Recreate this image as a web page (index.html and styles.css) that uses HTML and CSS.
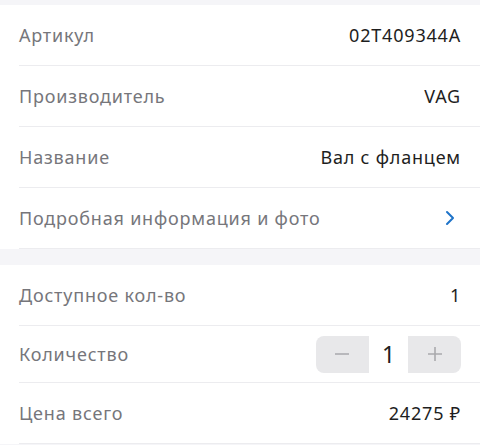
FILE: index.html
```html
<!DOCTYPE html>
<html lang="ru">
<head>
<meta charset="utf-8">
<link rel="stylesheet" href="styles.css">
</head>
<body>
<div class="page">
  <section class="group">
    <div class="row"><span class="label">Артикул</span><span class="value">02T409344A</span></div>
    <div class="row"><span class="label">Производитель</span><span class="value">VAG</span></div>
    <div class="row"><span class="label">Название</span><span class="value">Вал с фланцем</span></div>
    <div class="row"><span class="label">Подробная информация и фото</span>
      <svg class="chev" width="10" height="16" viewBox="0 0 10 16"><path d="M2 2 L8 8 L2 14" fill="none" stroke="#1f74c9" stroke-width="2" stroke-linecap="round" stroke-linejoin="round"/></svg>
    </div>
  </section>
  <section class="group second">
    <div class="row"><span class="label">Доступное кол-во</span><span class="value">1</span></div>
    <div class="row short"><span class="label">Количество</span>
      <div class="stepper">
        <span class="btn"><svg width="18" height="18" viewBox="0 0 18 18"><path d="M2 9 H16" stroke="#a9a9ad" stroke-width="1.6"/></svg></span>
        <span class="qty">1</span>
        <span class="btn"><svg width="18" height="18" viewBox="0 0 18 18"><path d="M2 9 H16 M9 2 V16" stroke="#a9a9ad" stroke-width="1.6"/></svg></span>
      </div>
    </div>
    <div class="row"><span class="label">Цена всего</span><span class="value">24275 ₽</span></div>
  </section>
</div>
</body>
</html>
```
FILE: styles.css
```css
html, body { margin: 0; padding: 0; }
body {
  background: #f5f5f8;
  font-family: "Noto Sans", "Open Sans", sans-serif;
  font-size: 18px;
  letter-spacing: 0.8px;
}
.page { padding-top: 5px; }
.group { background: #fff; padding-left: 19px; }
.second { margin-top: 16px; }
.row {
  height: 60px;
  display: flex;
  align-items: center;
  justify-content: space-between;
  padding-right: 19px;
  border-bottom: 1px solid #ececef;
}
.row.short { height: 56px; }
.label { color: #76767b; }
.value { color: #1e1e1e; }
.chev { margin-right: 6px; }
.stepper {
  display: flex;
  height: 37px;
  width: 145px;
  border-radius: 8px;
  background: #e8e8ea;
  overflow: hidden;
  letter-spacing: 0;
}
.btn {
  width: 53px;
  display: flex;
  align-items: center;
  justify-content: center;
}
.qty {
  width: 40px;
  background: #fff;
  display: flex;
  align-items: center;
  justify-content: center;
  font-size: 23px;
  color: #1e1e1e;
}
```
